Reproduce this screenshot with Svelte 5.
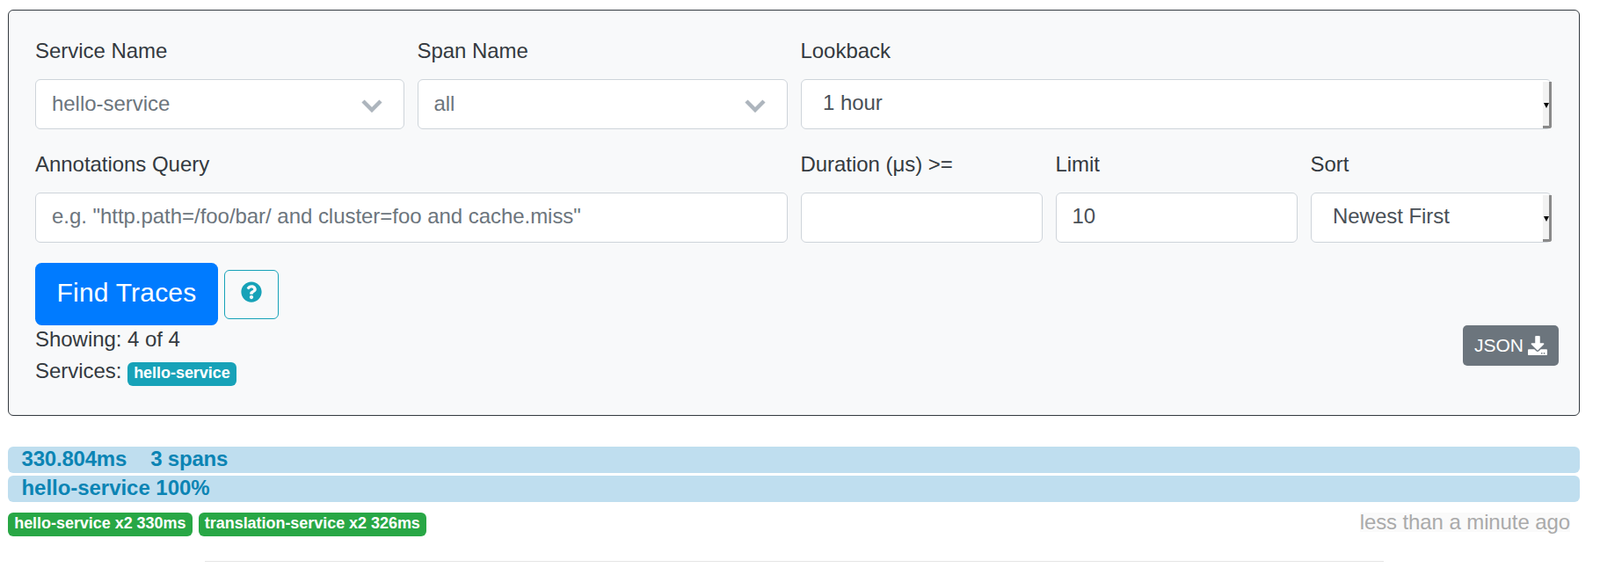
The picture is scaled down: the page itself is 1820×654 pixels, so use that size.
<script>
    const services = [
        { name: 'hello-service', count: 2, time: '330ms' },
        { name: 'translation-service', count: 2, time: '326ms' }
    ];
</script>

<div class="page">
    <form class="card" on:submit|preventDefault>
        <div class="fields">
            <div class="field">
                <label for="service">Service Name</label>
                <div class="combo">
                    <select id="service" class="muted"><option>hello-service</option></select>
                    <svg class="chevron" viewBox="0 0 24 15"><path d="M2 2l10 10L22 2" /></svg>
                </div>
            </div>
            <div class="field">
                <label for="span">Span Name</label>
                <div class="combo">
                    <select id="span" class="muted"><option>all</option></select>
                    <svg class="chevron" viewBox="0 0 24 15"><path d="M2 2l10 10L22 2" /></svg>
                </div>
            </div>
            <div class="field wide">
                <label for="lookback">Lookback</label>
                <div class="native">
                    <select id="lookback" class="plain"><option>1 hour</option></select>
                </div>
            </div>

            <div class="field two">
                <label for="query">Annotations Query</label>
                <input id="query" type="text" placeholder={'e.g. "http.path=/foo/bar/ and cluster=foo and cache.miss"'} />
            </div>
            <div class="field">
                <label for="duration">Duration (μs) &gt;=</label>
                <input id="duration" type="text" />
            </div>
            <div class="field">
                <label for="limit">Limit</label>
                <input id="limit" type="text" value="10" />
            </div>
            <div class="field">
                <label for="sort">Sort</label>
                <div class="native">
                    <select id="sort" class="plain"><option>Newest First</option></select>
                </div>
            </div>
        </div>

        <div class="actions">
            <button class="find" type="submit">Find Traces</button>
            <button class="help" type="button" aria-label="Help">
                <svg viewBox="0 0 512 512"><path d="M504 256c0 136.997-111.043 248-248 248S8 392.997 8 256C8 119.083 119.043 8 256 8s248 111.083 248 248zM262.655 90c-54.497 0-89.255 22.957-116.549 63.758-3.536 5.286-2.353 12.415 2.715 16.258l34.699 26.31c5.205 3.947 12.621 3.008 16.665-2.122 17.864-22.658 30.113-35.797 57.303-35.797 20.429 0 45.698 13.148 45.698 32.958 0 14.976-12.363 22.667-32.534 33.976C247.128 238.528 216 254.941 216 296v4c0 6.627 5.373 12 12 12h56c6.627 0 12-5.373 12-12v-1.333c0-28.462 83.186-29.647 83.186-106.667 0-58.002-60.165-102-116.531-102zM256 338c-25.365 0-46 20.635-46 46 0 25.364 20.635 46 46 46s46-20.636 46-46c0-25.365-20.635-46-46-46z" /></svg>
            </button>
        </div>

        <div class="summary">
            <div>
                <div>Showing: 4 of 4</div>
                <div>Services: <span class="badge info">hello-service</span></div>
            </div>
            <button class="json" type="button">
                JSON
                <svg viewBox="0 0 512 512"><path d="M216 0h80c13.3 0 24 10.7 24 24v168h87.7c17.8 0 26.7 21.5 14.1 34.1L269.7 378.3c-7.5 7.5-19.8 7.5-27.3 0L90.1 226.1c-12.6-12.6-3.7-34.1 14.1-34.1H192V24c0-13.3 10.7-24 24-24zm296 376v112c0 13.3-10.7 24-24 24H24c-13.3 0-24-10.7-24-24V376c0-13.3 10.7-24 24-24h146.7l49 49c20.1 20.1 52.5 20.1 72.6 0l49-49H488c13.3 0 24 10.7 24 24zm-124 88c0-11-9-20-20-20s-20 9-20 20 9 20 20 20 20-9 20-20zm64 0c0-11-9-20-20-20s-20 9-20 20 9 20 20 20 20-9 20-20z" /></svg>
            </button>
        </div>
    </form>

    <div class="trace">
        <div class="bar head"><span>330.804ms</span><span>3 spans</span></div>
        <div class="bar"><span>hello-service 100%</span></div>
        <div class="meta">
            <div class="tags">
                {#each services as service}
                    <span class="badge ok">{service.name} x{service.count} {service.time}</span>
                {/each}
            </div>
            <span class="ago">less than a minute ago</span>
        </div>
    </div>

    <hr />
</div>

<style>
    :global(body) {
        background: #fff;
    }

    .page {
        padding: 11px 23px 0 9px;
        font-family: "Liberation Sans", Arial, sans-serif;
        font-size: 24px;
        line-height: 36px;
        letter-spacing: -0.04px;
        color: #343a40;
    }

    .card {
        padding: 27.5px 30.5px 32px 30px;
        background: #f8f9fa;
        border: 1.5px solid #343a40;
        border-radius: 6px;
    }

    .fields {
        display: grid;
        grid-template-columns: 419.5px 421px 275px 275px 274px;
        column-gap: 15px;
        row-gap: 21.5px;
    }

    .wide {
        grid-column: span 3;
    }

    .two {
        grid-column: span 2;
    }

    label {
        display: block;
        margin-bottom: 14.5px;
    }

    input,
    select {
        display: block;
        width: 100%;
        height: 57px;
        box-sizing: border-box;
        padding: 0 18px 4px;
        font: inherit;
        letter-spacing: inherit;
        color: #495057;
        background: #fff;
        border: 1.5px solid #ced4da;
        border-radius: 6px;
        outline: none;
        appearance: none;
    }

    input::placeholder {
        color: #6c757d;
        opacity: 1;
    }

    select.muted {
        padding-bottom: 2px;
        color: #6c757d;
    }

    select.plain {
        padding-left: 24.5px;
    }

    .combo,
    .native {
        position: relative;
    }

    .chevron {
        position: absolute;
        top: 23px;
        right: 25px;
        width: 24px;
        height: 15px;
        pointer-events: none;
    }

    .chevron path {
        fill: none;
        stroke: #adb5bd;
        stroke-width: 4.5;
    }

    /* the browser's own select button: grey track and a small arrow */
    .native::before {
        content: "";
        position: absolute;
        top: 3px;
        right: 0;
        bottom: 1px;
        width: 7px;
        background: #f2f2f2;
        border-right: 3px solid #8a8a8a;
        border-bottom: 3px solid #8a8a8a;
        border-radius: 0 0 3px 0;
        pointer-events: none;
    }

    .native::after {
        content: "";
        position: absolute;
        top: 27px;
        right: 3px;
        border-style: solid;
        border-width: 6px 3.5px 0;
        border-color: #000 transparent transparent;
        pointer-events: none;
    }

    .actions {
        display: flex;
        align-items: flex-start;
        gap: 7px;
        margin: 23px 0 -2px;
    }

    button {
        font: inherit;
        color: #fff;
        cursor: pointer;
    }

    .find {
        width: 208px;
        height: 71px;
        padding: 0 0 4px;
        font-size: 30px;
        letter-spacing: 0.2px;
        background: #007bff;
        border: 0;
        border-radius: 7.5px;
    }

    .help {
        display: flex;
        align-items: flex-start;
        justify-content: center;
        width: 62px;
        height: 56px;
        margin-top: 8px;
        padding: 12px 0 0;
        background: transparent;
        border: 1.5px solid #17a2b8;
        border-radius: 6px;
    }

    .help svg {
        width: 24px;
        height: 24px;
        fill: #17a2b8;
    }

    .summary {
        display: flex;
        justify-content: space-between;
        align-items: flex-start;
    }

    .json {
        display: flex;
        align-items: center;
        justify-content: center;
        gap: 5px;
        width: 109px;
        height: 46px;
        margin: 2px -7.5px 0 0;
        padding: 0;
        font-size: 21px;
        background: #6c757d;
        border: 0;
        border-radius: 5px;
    }

    .json svg {
        width: 22px;
        height: 22px;
        fill: #fff;
    }

    .badge {
        display: inline-block;
        padding: 3px 7.2px 6px;
        font-size: 18px;
        font-weight: 700;
        line-height: 18px;
        color: #fff;
        border-radius: 6px;
    }

    .info {
        background: #17a2b8;
    }

    .ok {
        background: #28a745;
    }

    .trace {
        margin-top: 34.5px;
    }

    .bar {
        display: flex;
        gap: 27px;
        height: 30px;
        margin-bottom: 3px;
        padding-left: 15.5px;
        font-weight: 700;
        line-height: 28px;
        color: #0b84b4;
        background: #bfdeef;
        border-radius: 6px;
    }

    .head {
        letter-spacing: -0.2px;
    }

    .meta {
        display: flex;
        justify-content: space-between;
        align-items: flex-start;
        margin-top: 12px;
        padding-right: 11px;
        height: 27px;
    }

    .tags {
        display: flex;
        gap: 7px;
    }

    .ago {
        margin-top: -7px;
        letter-spacing: -0.1px;
        color: #aaa;
        background: linear-gradient(#fafafa, #fafafa) center / 100% 22px no-repeat;
    }

    hr {
        width: 75%;
        height: 0;
        margin: 28px auto 0;
        border: 0;
        border-top: 1.5px solid rgba(0, 0, 0, 0.1);
    }
</style>
